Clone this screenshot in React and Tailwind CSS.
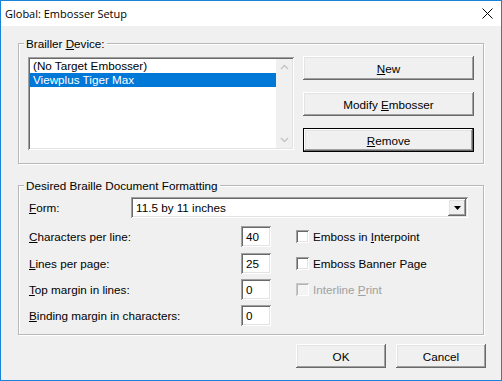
const raised =
  "bg-[#f0f0f0] shadow-[inset_-1px_-1px_0_#696969,inset_1px_1px_0_#ffffff,inset_-2px_-2px_0_#a0a0a0,inset_2px_2px_0_#e3e3e3]";
const sunken =
  "shadow-[inset_1px_1px_0_#a0a0a0,inset_-1px_-1px_0_#ffffff,inset_2px_2px_0_#696969,inset_-2px_-2px_0_#e3e3e3]";

function Button({ children, isDefault, className = "" }) {
  if (isDefault) {
    return (
      <div className={`border border-black ${className}`}>
        <button type="button" className={`flex h-full w-full items-center justify-center ${raised}`}>
          {children}
        </button>
      </div>
    );
  }
  return (
    <button type="button" className={`flex items-center justify-center ${raised} ${className}`}>
      {children}
    </button>
  );
}

function Chevron({ down }) {
  return (
    <svg width="9" height="6" viewBox="0 0 9 6" className="block">
      <path
        d={down ? "M1 1 L4.5 4.5 L8 1" : "M1 5 L4.5 1.5 L8 5"}
        fill="none"
        stroke="#c3c3c3"
        strokeWidth="1.4"
      />
    </svg>
  );
}

function Field({ label, value }) {
  return (
    <>
      <div className="ml-[5px] w-[212px]">{label}</div>
      <div className={`flex h-[21px] w-[30px] items-center bg-white pl-[5px] ${sunken}`}>{value}</div>
    </>
  );
}

function Check({ label, disabled }) {
  return (
    <div className="ml-[25px] flex items-center">
      <div
        className={`h-[13px] w-[13px] ${disabled ? "bg-[#f4f4f4] shadow-[inset_1px_1px_0_#c8c8c8,inset_-1px_-1px_0_#ffffff,inset_2px_2px_0_#b4b4b4]" : `bg-white ${sunken}`}`}
      />
      <span className={`ml-[4px] ${disabled ? "text-[#a0a0a0]" : "text-black"}`}>{label}</span>
    </div>
  );
}

export default function App() {
  return (
    <div className="flex h-[381px] w-[502px] flex-col border border-[#1883d7] font-['Liberation_Sans',Arial,sans-serif] text-[11.7px] leading-[13px] text-black">
      <div className="flex h-[25px] shrink-0 items-center justify-between bg-white pl-[4px] pr-[8px]">
        <span className="font-['Open_Sans',sans-serif] text-[11px]">Global: Embosser Setup</span>
        <svg width="11" height="11" viewBox="0 0 11 11">
          <path d="M0.5 0.5 L10.5 10.5 M10.5 0.5 L0.5 10.5" stroke="#000" strokeWidth="1" />
        </svg>
      </div>

      <div className="flex flex-1 flex-col bg-[#f0f0f0] px-[17px] pt-[11px]">
        <fieldset className="border border-[#b8b8b8] px-[5px] pt-[6px] pb-[11px] shadow-[inset_1px_1px_0_#ffffff,1px_1px_0_#ffffff]">
          <legend className="bg-[#f0f0f0] px-[2px] leading-[13px]">
            Brailler <u>D</u>evice:
          </legend>
          <div className="flex">
            <div className={`ml-[4px] mt-[1px] flex h-[93px] w-[266px] bg-white p-[2px] ${sunken}`}>
              <div className="flex-1">
                <div className="h-[14px] pl-[3px] leading-[14px]">(No Target Embosser)</div>
                <div className="h-[14px] bg-[#0078d7] pl-[3px] leading-[14px] text-white">Viewplus Tiger Max</div>
              </div>
              <div className="flex w-[16px] flex-col items-center justify-between bg-[#f0f0f0] py-[5px]">
                <Chevron />
                <Chevron down />
              </div>
            </div>
            <div className="ml-[9px] flex w-[171px] flex-col gap-[12px]">
              <Button className="h-[24px]">
                <span>
                  <u>N</u>ew
                </span>
              </Button>
              <Button className="h-[24px]">
                <span>
                  Modify <u>E</u>mbosser
                </span>
              </Button>
              <Button isDefault className="h-[24px]">
                <span>
                  <u>R</u>emove
                </span>
              </Button>
            </div>
          </div>
        </fieldset>

        <fieldset className="mt-[15px] border border-[#b8b8b8] px-[5px] pt-[5px] pb-[8px] shadow-[inset_1px_1px_0_#ffffff,1px_1px_0_#ffffff]">
          <legend className="bg-[#f0f0f0] px-[2px] leading-[13px]">Desired Braille Document Formatting</legend>
          <div className="flex h-[21px] items-center">
            <div className="ml-[5px] w-[102px]">
              <u>F</u>orm:
            </div>
            <div className={`flex h-[21px] w-[337px] items-center bg-white p-[2px] ${sunken}`}>
              <span className="flex-1 pl-[3px]">11.5 by 11 inches</span>
              <div className={`flex h-[17px] w-[18px] items-center justify-center ${raised}`}>
                <svg width="7" height="4" viewBox="0 0 7 4">
                  <path d="M0 0 H7 L3.5 4 Z" fill="#000" />
                </svg>
              </div>
            </div>
          </div>

          <div className="mt-[8px] flex h-[21px] items-center">
            <Field label={<><u>C</u>haracters per line:</>} value="40" />
            <Check label={<>Emboss in <u>I</u>nterpoint</>} />
          </div>
          <div className="mt-[6px] flex h-[21px] items-center">
            <Field label={<><u>L</u>ines per page:</>} value="25" />
            <Check label="Emboss Banner Page" />
          </div>
          <div className="mt-[5px] flex h-[21px] items-center">
            <Field label={<><u>T</u>op margin in lines:</>} value="0" />
            <Check label={<>Interline <u>P</u>rint</>} disabled />
          </div>
          <div className="mt-[5px] flex h-[21px] items-center">
            <Field label={<><u>B</u>inding margin in characters:</>} value="0" />
          </div>
        </fieldset>

        <div className="-mr-[2px] mt-[9px] flex justify-end gap-[10px]">
          <Button className="h-[24px] w-[90px]">OK</Button>
          <Button className="h-[24px] w-[90px]">Cancel</Button>
        </div>
      </div>
    </div>
  );
}
